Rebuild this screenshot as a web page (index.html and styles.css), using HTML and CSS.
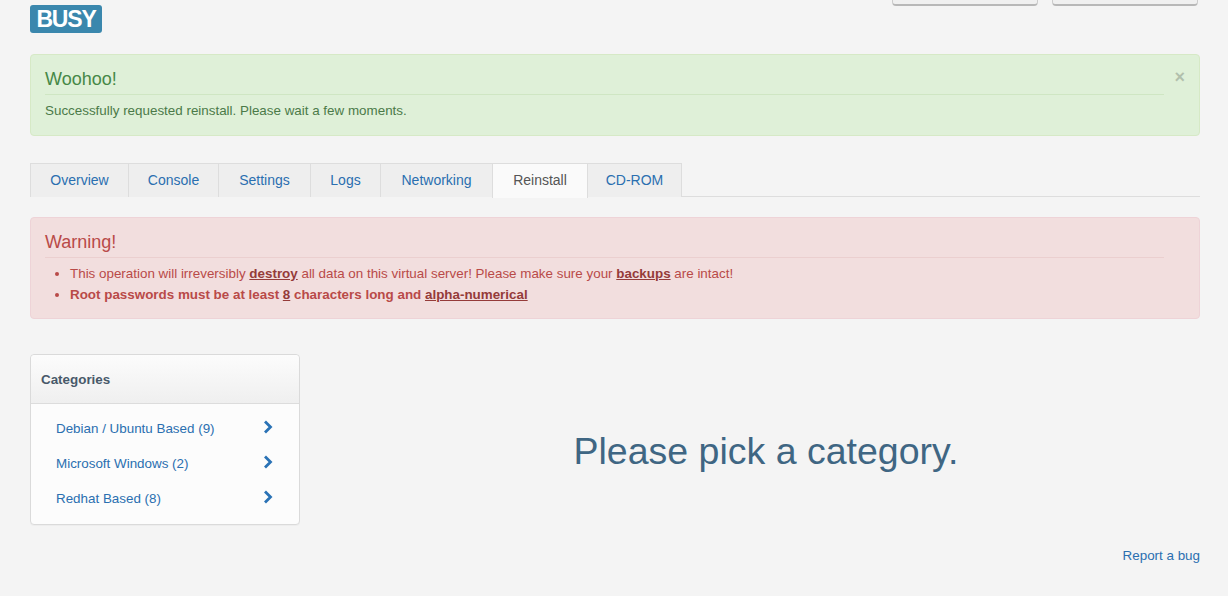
FILE: index.html
```html
<!DOCTYPE html>
<html>
<head>
<meta charset="utf-8">
<link rel="stylesheet" href="styles.css">
</head>
<body>
<div class="page">
  <div class="header">
    <span class="label-busy">BUSY</span>
    <div class="top-buttons">
      <span class="top-btn"></span>
      <span class="top-btn"></span>
    </div>
  </div>

  <div class="alert alert-success">
    <span class="close">&times;</span>
    <h4 class="alert-title">Woohoo!</h4>
    <p class="alert-text">Successfully requested reinstall. Please wait a few moments.</p>
  </div>

  <ul class="tabs">
    <li class="tab" style="width:99px">Overview</li>
    <li class="tab" style="width:91px">Console</li>
    <li class="tab" style="width:93px">Settings</li>
    <li class="tab" style="width:71px">Logs</li>
    <li class="tab" style="width:113px">Networking</li>
    <li class="tab active" style="width:96px">Reinstall</li>
    <li class="tab" style="width:95px">CD-ROM</li>
  </ul>

  <div class="alert alert-danger">
    <h4 class="alert-title">Warning!</h4>
    <ul class="warn-list">
      <li>This operation will irreversibly <a>destroy</a> all data on this virtual server! Please make sure your <a>backups</a> are intact!</li>
      <li class="strong">Root passwords must be at least <a>8</a> characters long and <a>alpha-numerical</a></li>
    </ul>
  </div>

  <div class="content">
    <div class="panel">
      <div class="panel-head">Categories</div>
      <ul class="cat-list">
        <li class="cat"><span>Debian / Ubuntu Based (9)</span><svg class="chev" viewBox="0 0 10 14" width="10" height="14"><path d="M2 1.5 L7.5 7 L2 12.5" fill="none" stroke="currentColor" stroke-width="2.8"/></svg></li>
        <li class="cat"><span>Microsoft Windows (2)</span><svg class="chev" viewBox="0 0 10 14" width="10" height="14"><path d="M2 1.5 L7.5 7 L2 12.5" fill="none" stroke="currentColor" stroke-width="2.8"/></svg></li>
        <li class="cat"><span>Redhat Based (8)</span><svg class="chev" viewBox="0 0 10 14" width="10" height="14"><path d="M2 1.5 L7.5 7 L2 12.5" fill="none" stroke="currentColor" stroke-width="2.8"/></svg></li>
      </ul>
    </div>
    <div class="pick">Please pick a category.</div>
  </div>

  <div class="footer"><a>Report a bug</a></div>
</div>
</body>
</html>
```

FILE: styles.css
```css
* { box-sizing: border-box; }
html, body { margin: 0; padding: 0; }
body {
  background: #f4f4f4;
  font-family: "Liberation Sans", Arial, sans-serif;
  font-size: 13.4px;
  color: #333;
  overflow: hidden;
}
.page { padding: 0 28px 0 30px; }

.header {
  display: flex;
  justify-content: space-between;
  align-items: flex-start;
  height: 54px;
  padding-top: 5px;
}
.label-busy {
  display: inline-block;
  background: #3a87ad;
  color: #fff;
  font-weight: bold;
  font-size: 23px;
  line-height: 28px;
  height: 28px;
  width: 72px;
  text-align: center;
  border-radius: 3px;
  letter-spacing: -1.2px;
}
.top-buttons {
  display: flex;
  gap: 14px;
  margin-top: -35px;
  margin-right: 2px;
}
.top-btn {
  display: block;
  width: 146px;
  height: 36px;
  background: #f0f0f0;
  border: 1px solid #ccc;
  border-bottom: 2px solid #b8b8b8;
  border-radius: 4px;
}

.alert {
  position: relative;
  border: 1px solid;
  border-radius: 4px;
  padding: 14px 35px 14px 14px;
}
.alert-success {
  background: #dff0d8;
  border-color: #d6e9c6;
  color: #4b7a48;
  height: 82px;
}
.alert-success .alert-title { color: #468847; }
.alert-danger {
  background: #f2dede;
  border-color: #eed3d7;
  color: #b94a48;
  height: 102px;
  margin-top: 20px;
}
.alert-title {
  margin: 0;
  font-size: 18px;
  font-weight: normal;
  line-height: 20px;
  padding-bottom: 5px;
  border-bottom: 1px solid rgba(0,0,0,0.04);
}
.alert-success .alert-title { border-bottom-color: #cfe6c3; }
.alert-danger .alert-title { border-bottom-color: #ebcfcf; }
.alert-text {
  margin: 8px 0 0;
  line-height: 16px;
}
.close {
  position: absolute;
  right: 14px;
  top: 12px;
  font-size: 18px;
  font-weight: bold;
  color: #000;
  opacity: 0.2;
  line-height: 20px;
}

.tabs {
  list-style: none;
  margin: 27px 0 0;
  padding: 0;
  display: flex;
  border-bottom: 1px solid #ddd;
  height: 34px;
}
.tab {
  height: 34px;
  background: #eeeeee;
  border: 1px solid #dddddd;
  border-bottom: none;
  margin-right: -1px;
  color: #2a6fb0;
  font-size: 14px;
  line-height: 33px;
  text-align: center;
}
.tab.active {
  background: #fafafa;
  color: #555;
  height: 35px;
  position: relative;
  z-index: 1;
}

.warn-list {
  margin: 5px 0 0;
  padding-left: 25px;
  line-height: 21px;
}
.warn-list li.strong { font-weight: bold; }
.warn-list a {
  color: #953b39;
  font-weight: bold;
  text-decoration: underline;
}

.content {
  display: grid;
  grid-template-columns: 270px 1fr;
  column-gap: 30px;
  margin-top: 35px;
}
.panel {
  background: #fcfcfc;
  border: 1px solid #dadada;
  border-radius: 4px;
  height: 171px;
  box-shadow: 0 1px 1px rgba(0,0,0,0.03);
}
.panel-head {
  height: 49px;
  background: linear-gradient(#fcfcfc, #efefef);
  border-bottom: 1px solid #dcdcdc;
  border-radius: 4px 4px 0 0;
  padding: 0 10px;
  line-height: 49px;
  font-weight: bold;
  font-size: 13.4px;
  color: #48596a;
}
.cat-list {
  list-style: none;
  margin: 0;
  padding: 7px 26px 0 25px;
}
.cat {
  display: flex;
  justify-content: space-between;
  align-items: center;
  height: 35px;
  color: #2a6fb0;
}
.chev { color: #2a72b5; margin-top: -3px; }

.pick {
  display: flex;
  align-items: center;
  justify-content: center;
  font-size: 37.5px;
  color: #3f6683;
  height: 194px;
  padding-left: 2px;
}

.footer {
  text-align: right;
  margin-top: 0;
}
.footer a { color: #2a6fb0; }
```
